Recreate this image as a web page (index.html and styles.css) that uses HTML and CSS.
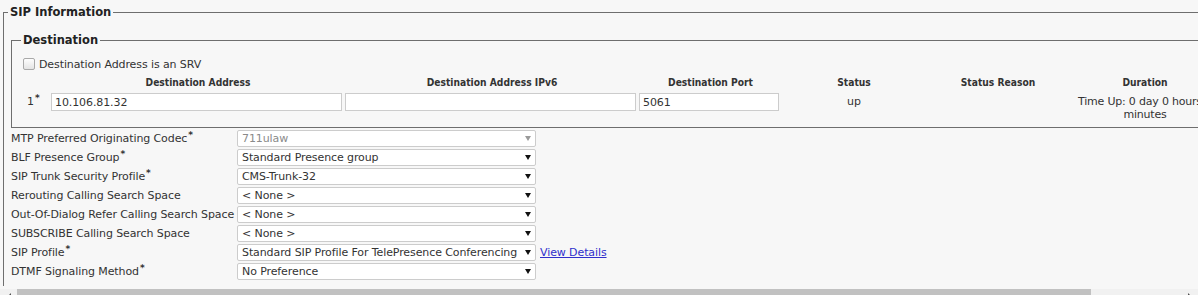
FILE: index.html
```html
<!DOCTYPE html>
<html lang="en">
<head>
    <meta charset="UTF-8">
    <meta name="viewport" content="width=device-width, initial-scale=1.0">
    <title>SIP Trunk Configuration</title>
    <link rel="stylesheet" href="styles.css">
</head>
<body>

    <div class="viewport">
        <fieldset class="group sip-info">
            <legend>SIP Information</legend>

            <fieldset class="group destination">
                <legend>Destination</legend>
                <div class="srv-row">
                    <span class="checkbox"></span>
                    <span>Destination Address is an SRV</span>
                </div>
                <table class="dest-table">
                    <colgroup>
                        <col class="c-idx">
                        <col class="c-addr">
                        <col class="c-addr">
                        <col class="c-port">
                        <col class="c-status">
                        <col class="c-status">
                        <col class="c-duration">
                    </colgroup>
                    <thead>
                        <tr>
                            <th></th>
                            <th>Destination Address</th>
                            <th>Destination Address IPv6</th>
                            <th>Destination Port</th>
                            <th>Status</th>
                            <th>Status Reason</th>
                            <th>Duration</th>
                        </tr>
                    </thead>
                    <tbody>
                        <tr>
                            <td class="idx">1<sup>*</sup></td>
                            <td class="field"><input class="text-input" type="text" value="10.106.81.32"></td>
                            <td class="field"><input class="text-input" type="text" value=""></td>
                            <td class="field"><input class="text-input" type="text" value="5061"></td>
                            <td class="center">up</td>
                            <td class="center"></td>
                            <td class="center duration">Time Up: 0 day 0 hours 0<br>minutes</td>
                        </tr>
                    </tbody>
                </table>
            </fieldset>

            <div class="form-rows">
                <div class="form-row">
                    <span class="label">MTP Preferred Originating Codec<sup>*</sup></span>
                    <div class="select disabled"><span class="value">711ulaw</span><span class="arrow"></span></div>
                </div>
                <div class="form-row">
                    <span class="label">BLF Presence Group<sup>*</sup></span>
                    <div class="select"><span class="value">Standard Presence group</span><span class="arrow"></span></div>
                </div>
                <div class="form-row">
                    <span class="label">SIP Trunk Security Profile<sup>*</sup></span>
                    <div class="select"><span class="value">CMS-Trunk-32</span><span class="arrow"></span></div>
                </div>
                <div class="form-row">
                    <span class="label">Rerouting Calling Search Space</span>
                    <div class="select"><span class="value">&lt; None &gt;</span><span class="arrow"></span></div>
                </div>
                <div class="form-row">
                    <span class="label">Out-Of-Dialog Refer Calling Search Space</span>
                    <div class="select"><span class="value">&lt; None &gt;</span><span class="arrow"></span></div>
                </div>
                <div class="form-row">
                    <span class="label">SUBSCRIBE Calling Search Space</span>
                    <div class="select"><span class="value">&lt; None &gt;</span><span class="arrow"></span></div>
                </div>
                <div class="form-row">
                    <span class="label">SIP Profile<sup>*</sup></span>
                    <div class="select"><span class="value">Standard SIP Profile For TelePresence Conferencing</span><span class="arrow"></span></div>
                    <a class="details" href="#">View Details</a>
                </div>
                <div class="form-row">
                    <span class="label">DTMF Signaling Method<sup>*</sup></span>
                    <div class="select"><span class="value">No Preference</span><span class="arrow"></span></div>
                </div>
            </div>
        </fieldset>
    </div>

    <div class="hscroll">
        <span class="scroll-btn"><span class="tri-left"></span></span>
        <span class="thumb"></span>
        <span class="scroll-btn right"><span class="tri-right"></span></span>
    </div>

</body>
</html>
```

FILE: styles.css
```css
:root {
    --bg-color: #f7f7f7;
    --text-color: #333333;
    --line-color: #6e6e6e;
    --field-border: #cccccc;
    --link-color: #3030cc;
    --font-main: "DejaVu Sans", sans-serif;
    --font-head: "DejaVu Sans Condensed", "DejaVu Sans", sans-serif;
}

html, body {
    margin: 0;
    height: 295px;
    overflow: hidden;
    background-color: var(--bg-color);
    color: var(--text-color);
    font-family: var(--font-main);
    font-size: 11px;
    letter-spacing: -0.1px;
}

.viewport {
    box-sizing: border-box;
    width: 1198px;
    height: 286px;
    padding-top: 1px;
    overflow: hidden;
}

.group {
    border: 1px solid var(--line-color);
    border-right: none;
    margin: 0;
    min-width: 0;
}

.group > legend {
    font-weight: bold;
    font-size: 11.5px;
    line-height: 22px;
    letter-spacing: 0;
    padding: 0 2px;
    margin-left: -3px;
    color: #222;
}

.sip-info {
    width: 1260px;
    margin-left: 3px;
    padding: 0 0 0 7px;
    border-bottom: none;
    height: 300px;
}

.destination {
    margin-top: 6px;
    padding: 0 0 6px 12px;
}

.srv-row {
    display: flex;
    align-items: center;
    height: 14px;
    margin-top: 6px;
    gap: 4px;
}

.checkbox {
    width: 10px;
    height: 10px;
    margin-left: -1px;
    border: 1px solid #a9a9a9;
    border-radius: 2px;
    background: linear-gradient(#fdfdfd, #e4e4e4);
}

.dest-table {
    table-layout: fixed;
    border-collapse: collapse;
    width: 1196px;
}

.c-idx { width: 27px; }
.c-addr { width: 294px; }
.c-port { width: 143px; }
.c-status { width: 144px; }
.c-duration { width: 150px; }

.dest-table th {
    padding: 5px 0 0;
    height: 14px;
    line-height: 14px;
    font-family: var(--font-head);
    font-size: 10.2px;
    letter-spacing: 0;
    font-weight: bold;
    text-align: center;
    white-space: nowrap;
}

.dest-table td {
    padding: 3px 0 0;
    vertical-align: top;
}

.dest-table td.idx {
    padding-left: 3px;
    line-height: 18px;
}

.dest-table td.field {
    padding-right: 3px;
}

.dest-table td.center {
    text-align: center;
    line-height: 13px;
    padding-top: 5px;
    white-space: nowrap;
}

.dest-table td.duration {
    letter-spacing: -0.2px;
}

sup {
    font-size: 9px;
    font-weight: bold;
    vertical-align: 4px;
    line-height: 0;
    margin-left: 1px;
}

.text-input {
    box-sizing: border-box;
    display: block;
    width: 100%;
    height: 18px;
    margin: 0;
    padding: 0 3px;
    border: 1px solid var(--field-border);
    background: #ffffff;
    font: inherit;
    letter-spacing: inherit;
    color: var(--text-color);
    outline: none;
}

.form-rows {
    display: flex;
    flex-direction: column;
    gap: 3px;
    margin-top: 2px;
}

.form-row {
    display: flex;
    align-items: center;
    height: 16px;
    white-space: nowrap;
}

.form-row .label {
    width: 226px;
    flex: none;
}

.select {
    box-sizing: border-box;
    display: flex;
    align-items: center;
    width: 299px;
    height: 17px;
    padding: 0 4px;
    border: 1px solid var(--field-border);
    border-radius: 2px;
    background: #ffffff;
}

.select .value {
    flex: 1;
}

.select .arrow {
    width: 0;
    height: 0;
    border-left: 3px solid transparent;
    border-right: 3px solid transparent;
    border-top: 5px solid #111;
}

.select.disabled .value {
    color: #8a8a8a;
}

.select.disabled .arrow {
    border-top-color: #9a9a9a;
}

.details {
    margin-left: 4px;
    color: var(--link-color);
    text-decoration: underline;
}

.hscroll {
    display: flex;
    height: 17px;
    margin-top: 3px;
    background: #f1f1f1;
}

.scroll-btn {
    width: 17px;
    display: flex;
    justify-content: center;
    padding-top: 4px;
    box-sizing: border-box;
}

.scroll-btn.right {
    flex: 1;
    justify-content: flex-end;
    padding-right: 6px;
}

.tri-left {
    width: 0;
    height: 0;
    border-top: 4px solid transparent;
    border-bottom: 4px solid transparent;
    border-right: 4px solid #505050;
}

.tri-right {
    width: 0;
    height: 0;
    border-top: 4px solid transparent;
    border-bottom: 4px solid transparent;
    border-left: 4px solid #505050;
}

.thumb {
    width: 1074px;
    background: #c1c1c1;
}
```
